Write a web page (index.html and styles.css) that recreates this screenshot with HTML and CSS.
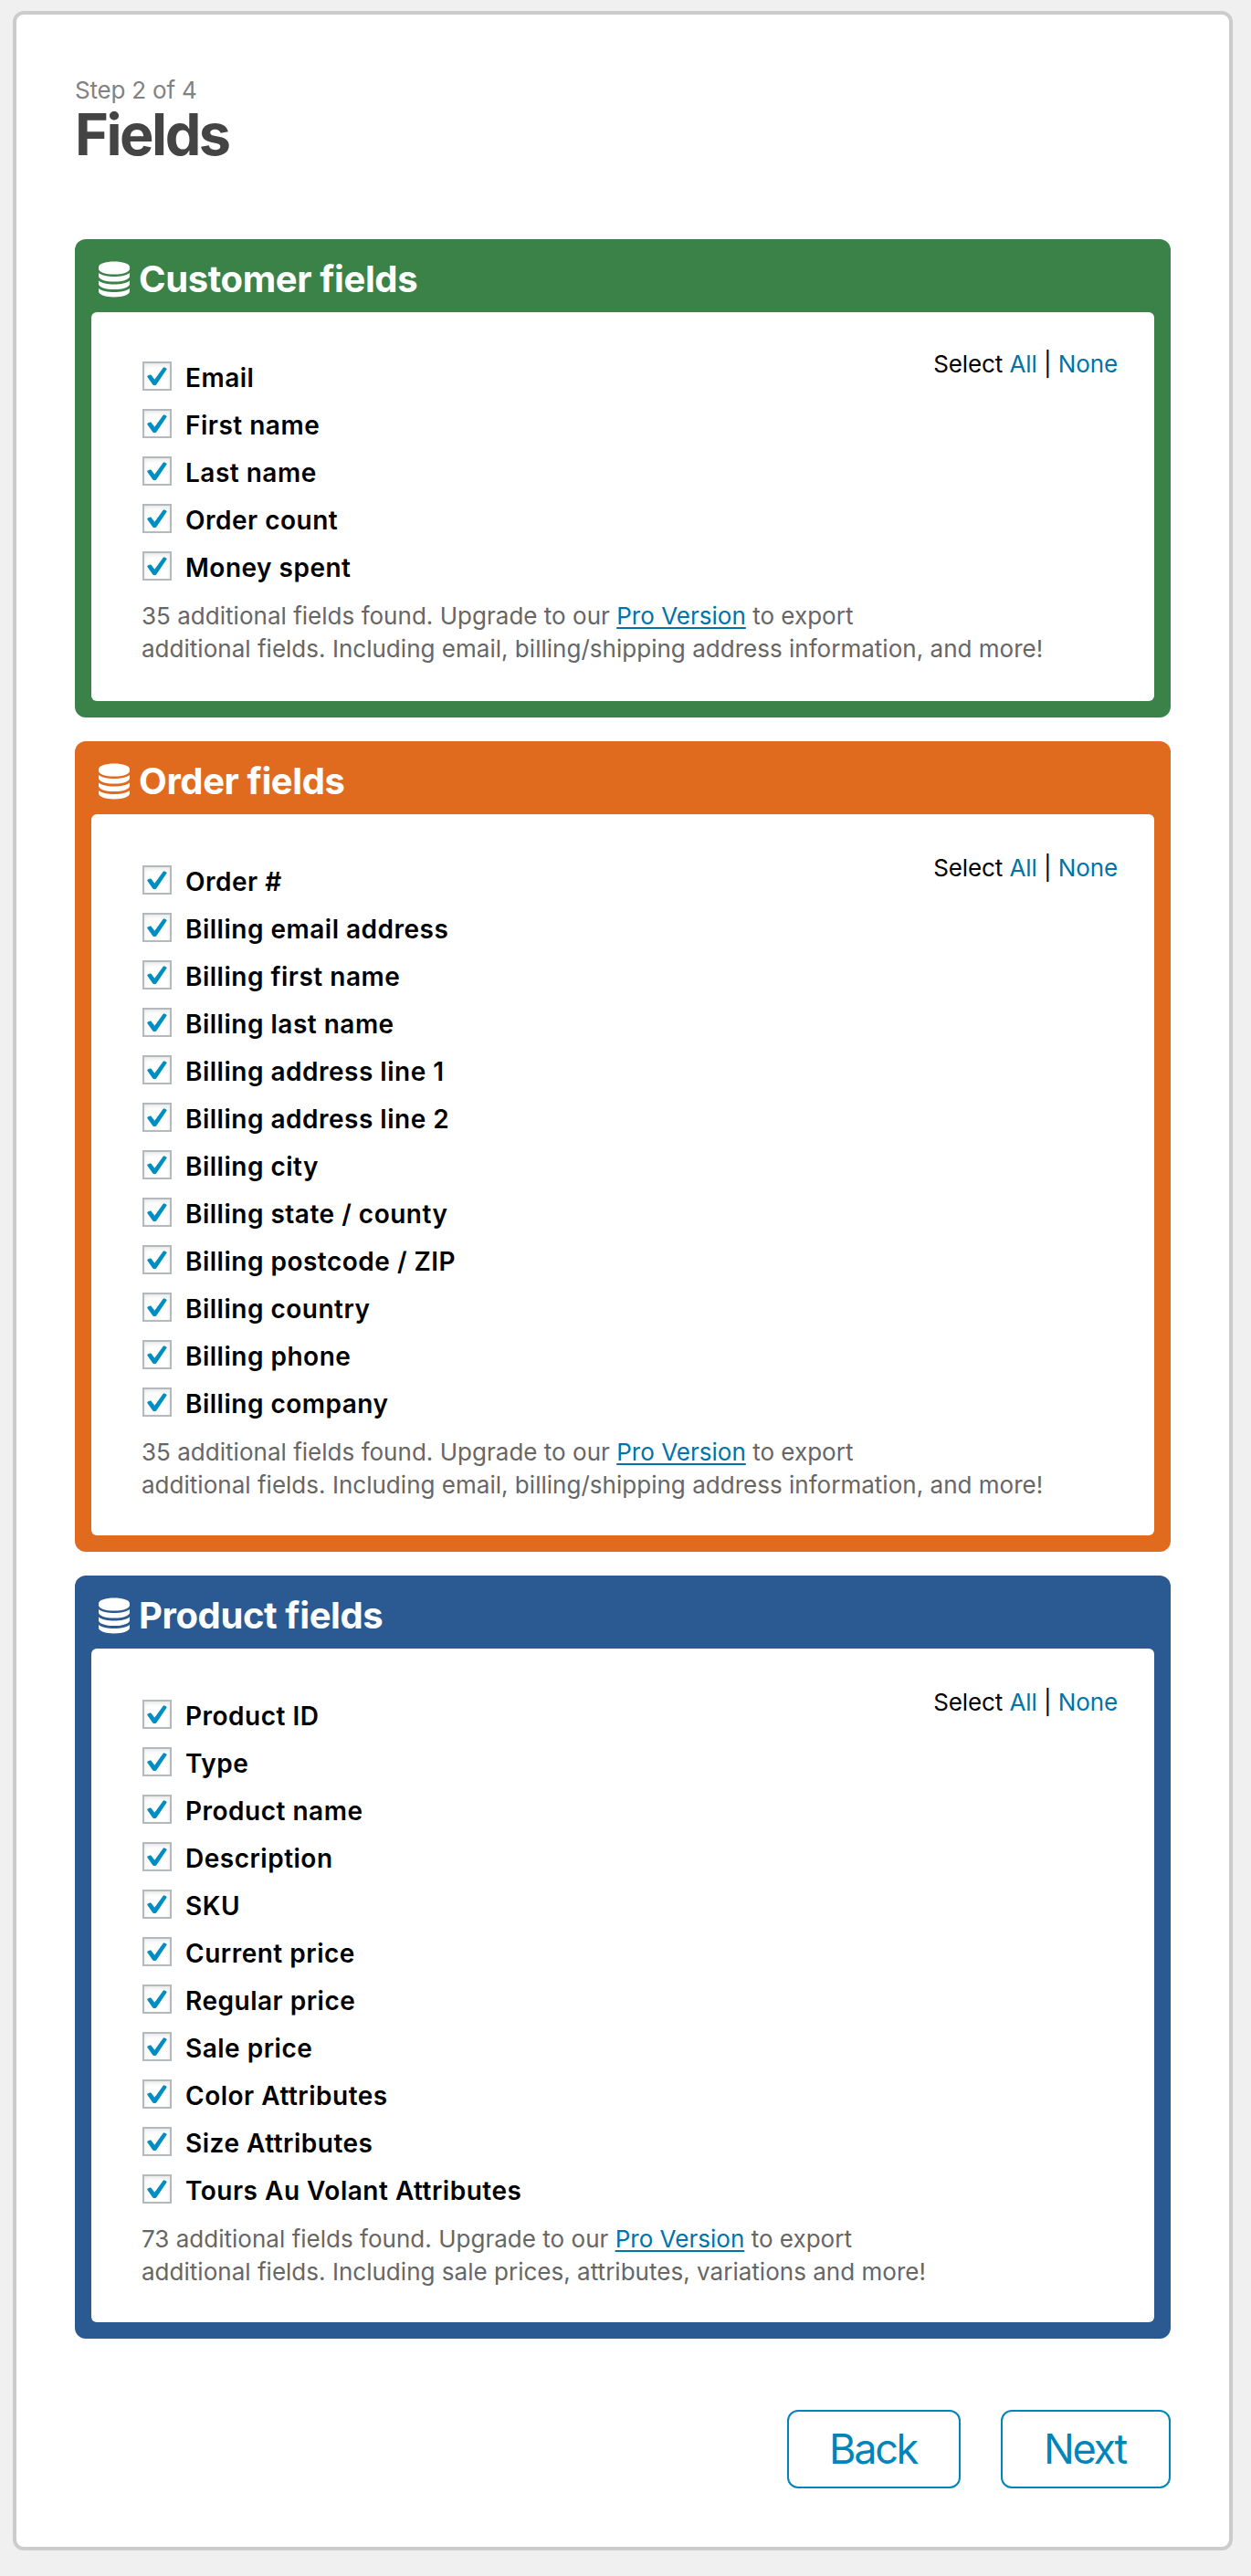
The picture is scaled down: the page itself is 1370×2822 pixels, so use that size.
FILE: index.html
```html
<!DOCTYPE html>
<html lang="en">
<head>
<meta charset="utf-8">
<title>Fields</title>
<link rel="stylesheet" href="styles.css">
</head>
<body>
<svg class="sprite" aria-hidden="true">
  <symbol id="database" viewBox="0 0 34 40">
    <path d="M0 6.700C0 3 7.600.6 17 .6s17 2.400 17 6.100v1.700c0 3.700-7.600 6.100-17 6.100S0 12.100 0 8.400z"/>
    <path d="M0 13c3.400 2.800 10 4 17 4s13.600-1.200 17-4v3.500c0 3.700-7.600 6.100-17 6.100S0 20.200 0 16.500z"/>
    <path d="M0 21.500c3.400 2.800 10 4 17 4s13.600-1.200 17-4V25c0 3.700-7.600 6.100-17 6.100S0 28.700 0 25z"/>
    <path d="M0 30c3.400 2.800 10 4 17 4s13.600-1.200 17-4v3.300c0 3.700-7.600 6.100-17 6.100S0 37 0 33.300z"/>
  </symbol>
  <symbol id="check" viewBox="0 0 32 32">
    <path d="M5.800 15.400 8.500 14.400q.7-.2 1.200.5l3.600 4.900 9.400-13q.6-.8 1.500-.4l2 1q.8.600.3 1.400L15.500 25q-.5.900-1.500 1h-1.500q-.9-.1-1.500-1l-5.600-8q-.6-1.100.4-1.600z"/>
  </symbol>
</svg>
<main class="panel">
  <header class="intro">
    <p class="step">Step 2 of 4</p>
    <h1 class="title">Fields</h1>
  </header>

  <section class="group customer">
    <h2 class="group-title"><svg class="db"><use href="#database"/></svg>Customer fields</h2>
    <div class="group-body">
      <ul class="fields">
        <li class="field"><span class="box"><svg><use href="#check"/></svg></span><span class="name">Email</span></li>
        <li class="field"><span class="box"><svg><use href="#check"/></svg></span><span class="name">First name</span></li>
        <li class="field"><span class="box"><svg><use href="#check"/></svg></span><span class="name">Last name</span></li>
        <li class="field"><span class="box"><svg><use href="#check"/></svg></span><span class="name">Order count</span></li>
        <li class="field"><span class="box"><svg><use href="#check"/></svg></span><span class="name">Money spent</span></li>
      </ul>
      <p class="select">Select <a href="#">All</a> | <a href="#">None</a></p>
      <p class="note">35 additional fields found. Upgrade to our <a href="#">Pro Version</a> to export<br>additional fields. Including email, billing/shipping address information, and more!</p>
    </div>
  </section>

  <section class="group order">
    <h2 class="group-title"><svg class="db"><use href="#database"/></svg>Order fields</h2>
    <div class="group-body">
      <ul class="fields">
        <li class="field"><span class="box"><svg><use href="#check"/></svg></span><span class="name">Order #</span></li>
        <li class="field"><span class="box"><svg><use href="#check"/></svg></span><span class="name">Billing email address</span></li>
        <li class="field"><span class="box"><svg><use href="#check"/></svg></span><span class="name">Billing first name</span></li>
        <li class="field"><span class="box"><svg><use href="#check"/></svg></span><span class="name">Billing last name</span></li>
        <li class="field"><span class="box"><svg><use href="#check"/></svg></span><span class="name">Billing address line 1</span></li>
        <li class="field"><span class="box"><svg><use href="#check"/></svg></span><span class="name">Billing address line 2</span></li>
        <li class="field"><span class="box"><svg><use href="#check"/></svg></span><span class="name">Billing city</span></li>
        <li class="field"><span class="box"><svg><use href="#check"/></svg></span><span class="name">Billing state / county</span></li>
        <li class="field"><span class="box"><svg><use href="#check"/></svg></span><span class="name">Billing postcode / ZIP</span></li>
        <li class="field"><span class="box"><svg><use href="#check"/></svg></span><span class="name">Billing country</span></li>
        <li class="field"><span class="box"><svg><use href="#check"/></svg></span><span class="name">Billing phone</span></li>
        <li class="field"><span class="box"><svg><use href="#check"/></svg></span><span class="name">Billing company</span></li>
      </ul>
      <p class="select">Select <a href="#">All</a> | <a href="#">None</a></p>
      <p class="note">35 additional fields found. Upgrade to our <a href="#">Pro Version</a> to export<br>additional fields. Including email, billing/shipping address information, and more!</p>
    </div>
  </section>

  <section class="group product">
    <h2 class="group-title"><svg class="db"><use href="#database"/></svg>Product fields</h2>
    <div class="group-body">
      <ul class="fields">
        <li class="field"><span class="box"><svg><use href="#check"/></svg></span><span class="name">Product ID</span></li>
        <li class="field"><span class="box"><svg><use href="#check"/></svg></span><span class="name">Type</span></li>
        <li class="field"><span class="box"><svg><use href="#check"/></svg></span><span class="name">Product name</span></li>
        <li class="field"><span class="box"><svg><use href="#check"/></svg></span><span class="name">Description</span></li>
        <li class="field"><span class="box"><svg><use href="#check"/></svg></span><span class="name">SKU</span></li>
        <li class="field"><span class="box"><svg><use href="#check"/></svg></span><span class="name">Current price</span></li>
        <li class="field"><span class="box"><svg><use href="#check"/></svg></span><span class="name">Regular price</span></li>
        <li class="field"><span class="box"><svg><use href="#check"/></svg></span><span class="name">Sale price</span></li>
        <li class="field"><span class="box"><svg><use href="#check"/></svg></span><span class="name">Color Attributes</span></li>
        <li class="field"><span class="box"><svg><use href="#check"/></svg></span><span class="name">Size Attributes</span></li>
        <li class="field"><span class="box"><svg><use href="#check"/></svg></span><span class="name">Tours Au Volant Attributes</span></li>
      </ul>
      <p class="select">Select <a href="#">All</a> | <a href="#">None</a></p>
      <p class="note">73 additional fields found. Upgrade to our <a href="#">Pro Version</a> to export<br>additional fields. Including sale prices, attributes, variations and more!</p>
    </div>
  </section>

  <nav class="actions">
    <a class="button back" href="#">Back</a>
    <a class="button next" href="#">Next</a>
  </nav>
</main>
</body>
</html>
```
FILE: styles.css
```css
* { box-sizing: border-box; }

body {
  margin: 0;
  padding: 12px 20px 28px 14px;
  background: #f0f0f0;
  color: #000;
  font-family: Inter, "Liberation Sans", sans-serif;
}

h1, h2, p, ul { margin: 0; padding: 0; }
a { color: #0073aa; text-decoration: none; }
.sprite { display: none; }

.panel {
  padding: 66px 64px 64px;
  border: 4px solid #ccc;
  border-radius: 12px;
  background: #fff;
}

.intro { height: 180px; }
.step {
  color: #828282;
  font-size: 26px;
  line-height: 34px;
  letter-spacing: -.2px;
}
.title {
  margin-top: -2px;
  color: #444;
  font-size: 63px;
  font-weight: 650;
  line-height: 66px;
  letter-spacing: -2.5px;
}

.group {
  margin-bottom: 26px;
  padding: 0 18px 18px;
  border-radius: 12px;
}
.customer { background: #3a8247; }
.order { background: #e06b1f; }
.product { background: #2b5a92; }

.group-title {
  display: flex;
  align-items: center;
  gap: 10px;
  height: 80px;
  padding: 8px 0 0 8px;
  color: #fff;
  font-size: 40px;
  font-weight: 650;
  line-height: 48px;
  letter-spacing: -.4px;
}
.db {
  width: 34px;
  height: 40px;
  fill: currentColor;
}

.group-body {
  display: grid;
  grid-template-columns: 1fr auto;
  padding: 41px 40px 37px 56px;
  border-radius: 6px;
  background: #fff;
}
.fields {
  display: grid;
  gap: 20px;
  padding-top: 15px;
  list-style: none;
}
.customer .group-body { padding-top: 39px; padding-bottom: 39px; }

.field {
  display: flex;
  align-items: center;
  gap: 15px;
  height: 32px;
}
.box {
  width: 32px;
  height: 32px;
  border: 2px solid #b4b9be;
  background: #fff;
  box-shadow: inset 0 2px 4px rgba(0, 0, 0, .1);
}
.box svg {
  display: block;
  width: 32px;
  height: 32px;
  margin: -2px;
  fill: #008ec2;
}
.name {
  padding-top: 4px;
  font-size: 28px;
  font-weight: 630;
  line-height: 32px;
  letter-spacing: .5px;
  white-space: nowrap;
}

.select {
  font-size: 26px;
  line-height: 36px;
  letter-spacing: -.1px;
}
.note {
  grid-column: 1 / -1;
  margin: 21px 0 0 -1px;
  color: #666;
  font-size: 26px;
  line-height: 36px;
  letter-spacing: .02px;
  white-space: nowrap;
}
.note a {
  text-decoration: underline;
  text-decoration-thickness: 2px;
  text-underline-offset: 3px;
}

.actions {
  display: flex;
  justify-content: flex-end;
  gap: 44px;
  margin-top: 78px;
}
.button {
  height: 86px;
  border: 2px solid #0085ba;
  border-radius: 12px;
  color: #0085ba;
  font-size: 45px;
  line-height: 81px;
  letter-spacing: -2.3px;
  text-align: center;
  text-indent: -2px;
}
.back { width: 190px; }
.next { width: 186px; }
```
